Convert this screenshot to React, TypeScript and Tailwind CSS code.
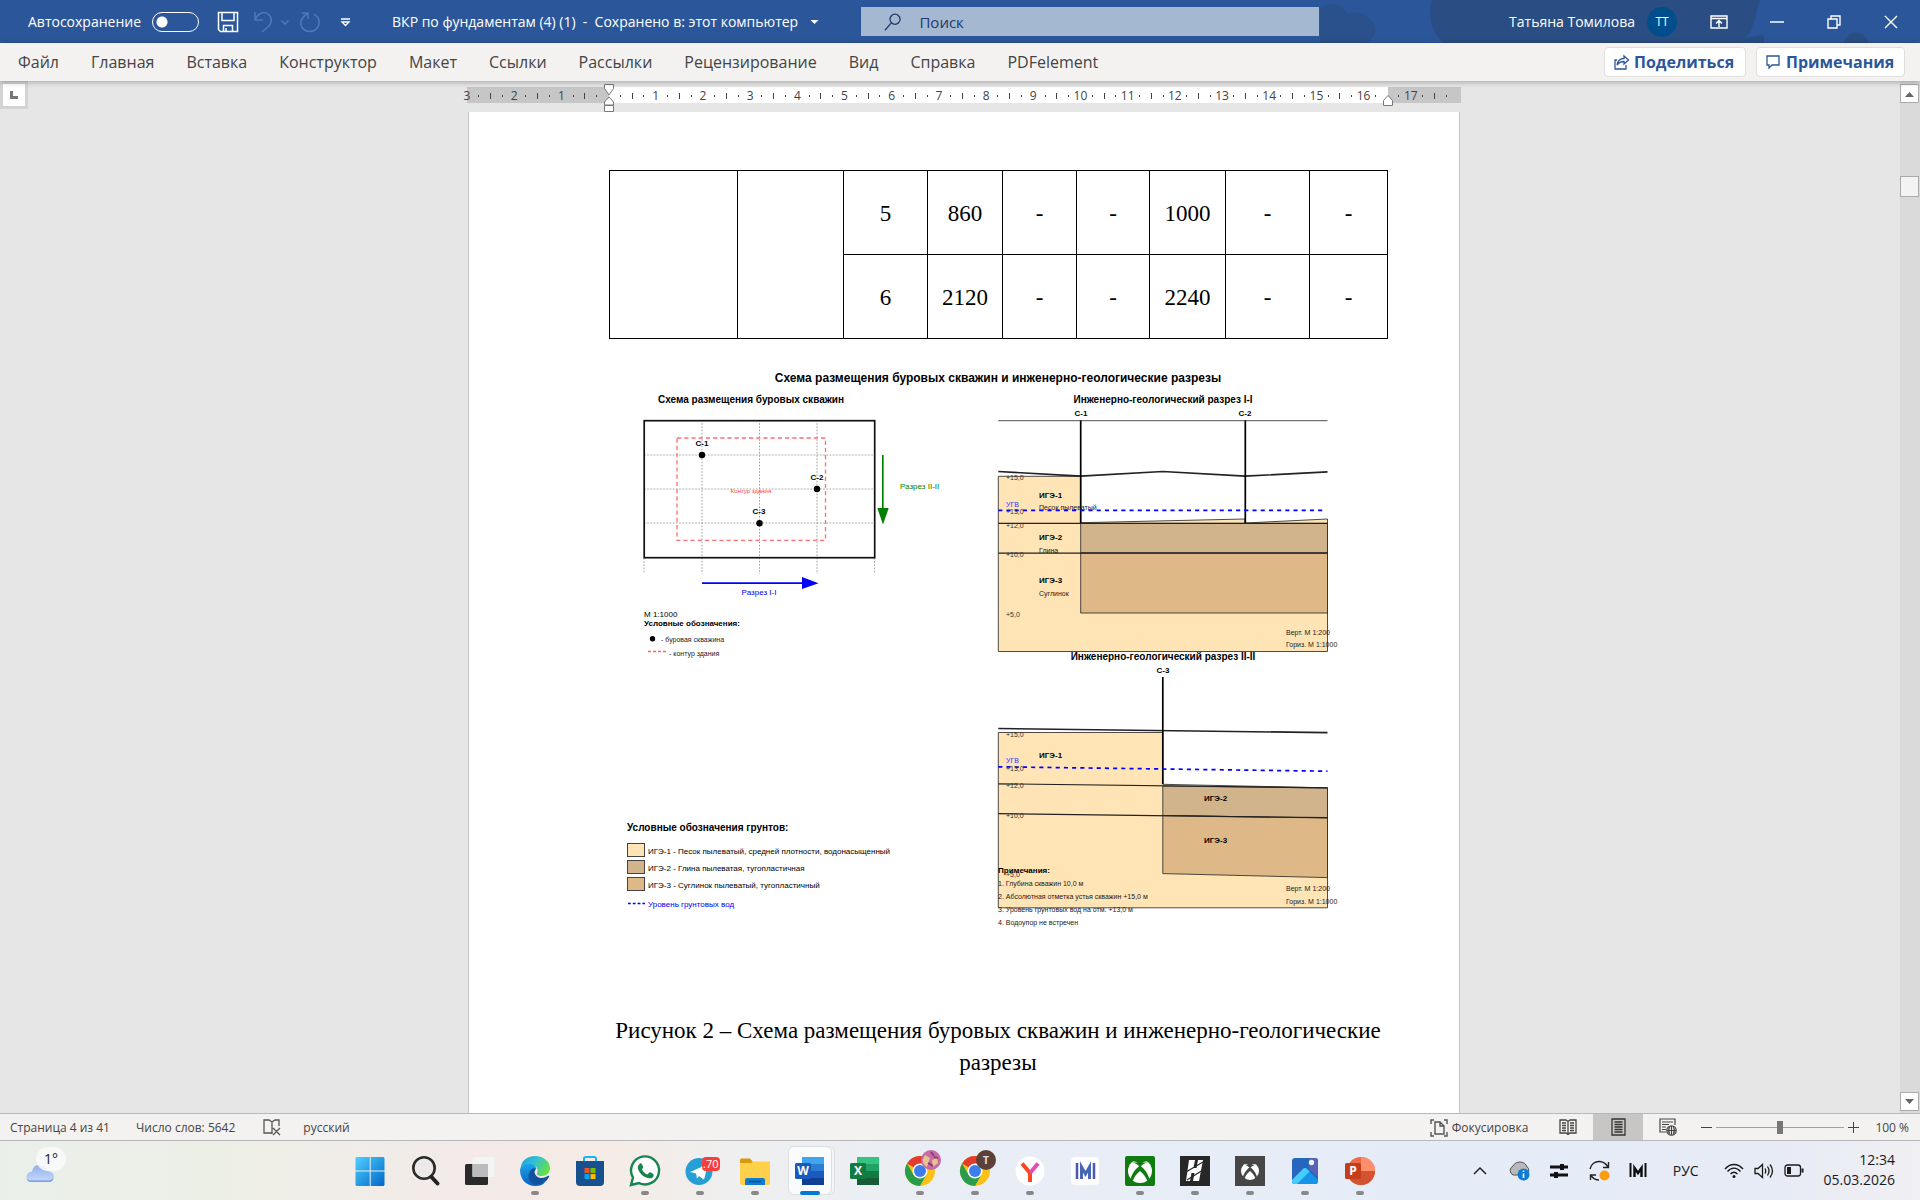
import type { ReactNode } from "react";

const ribbonTabs = [
  "Файл",
  "Главная",
  "Вставка",
  "Конструктор",
  "Макет",
  "Ссылки",
  "Рассылки",
  "Рецензирование",
  "Вид",
  "Справка",
  "PDFelement",
];

const tableRows = [
  ["5", "860", "-", "-", "1000", "-", "-"],
  ["6", "2120", "-", "-", "2240", "-", "-"],
];

function TitleBar() {
  return (
    <header className="relative grid h-[43px] shrink-0 grid-cols-[861fr_458fr_601fr] items-center bg-[#2b579a] text-white">
      <svg
        className="absolute right-0 top-0 h-full w-[600px]"
        viewBox="0 0 600 43"
        preserveAspectRatio="xMaxYMid slice"
        aria-hidden="true"
      >
        <g fill="#2a4d84">
          <path d="M0 8c12-8 22-4 27 5 14-2 24 2 28 14 2 7-3 12-8 16H0z" opacity=".6" />
          <path d="M112 0h26c-8 12-10 28 2 43h-16c-14-12-16-30-12-43z" />
          <path d="M130 0h310c-6 17-4 30-20 43H130z" />
          <path d="M420 43c4-5 12-7 24-8v8zM524 43c4-14 20-14 25 0z" />
        </g>
      </svg>

      <div className="relative flex items-center pl-7">
        <label className="flex items-center gap-[11px] text-sm leading-5">
          Автосохранение
          <input
            type="checkbox"
            role="switch"
            className="h-5 w-[47px] appearance-none rounded-full border border-white bg-[radial-gradient(circle_at_9px_9px,#fff_5px,transparent_6px)]"
          />
        </label>
        <button aria-label="Сохранить" className="ml-[18px]">
          <svg width="22" height="22" viewBox="0 0 22 22" fill="none" stroke="#fff" strokeWidth="1.5">
            <path d="M1.5 1.5h19v19h-17l-2-2zM5 1.5v8h12v-8M6.500 20.500v-6h9v6M9 20v-3" />
          </svg>
        </button>
        <button aria-label="Отменить" className="ml-3.5">
          <svg width="22" height="22" viewBox="0 0 22 22" fill="none" stroke="#4f7ab8" strokeWidth="1.500">
            <path d="M2 1v8h8M2 9c3-7 9-9 13-6 5 4 4 8 1 12l-7 6" />
          </svg>
        </button>
        <button aria-label="Варианты отмены" className="ml-1">
          <svg width="12" height="12" viewBox="0 0 12 12" fill="none" stroke="#4f7ab8" strokeWidth="1.500">
            <path d="M2.500 4.500l3.500 3.500 3.500-3.500" />
          </svg>
        </button>
        <button aria-label="Повторить" className="ml-2">
          <svg width="22" height="22" viewBox="0 0 22 22" fill="none" stroke="#4f7ab8" strokeWidth="1.500">
            <path d="M3 2h6v6M9 2.500C2 6 .5 12 3 16.500c4 5.500 12 5 15.500 0 3-5 1.500-10-3.500-13.500" />
          </svg>
        </button>
        <button aria-label="Настройка панели" className="ml-[18px]">
          <svg width="13" height="12" viewBox="0 0 13 12" fill="none" stroke="#fff" strokeWidth="1.300">
            <path d="M2 3h9M3 6h7l-3.500 3.500z" />
          </svg>
        </button>
        <button className="ml-10 flex items-center gap-3 whitespace-pre text-sm leading-5">
          {"ВКР по фундаментам (4) (1)  -  Сохранено в: этот компьютер"}
          <svg width="9" height="6" viewBox="0 0 9 6" fill="#fff" aria-hidden="true">
            <path d="M.5 1h8l-4 4z" />
          </svg>
        </button>
      </div>

      <label className="relative flex h-[29px] items-center bg-[#a5b8d1] pl-[23px] text-[#1c3a6b]">
        <svg width="19" height="20" viewBox="0 0 19 20" fill="none" stroke="currentColor" strokeWidth="1.400">
          <circle cx="12" cy="7" r="5.500" />
          <path d="M8 11l-7 8" />
        </svg>
        <input
          type="search"
          aria-label="Поиск"
          placeholder="Поиск"
          className="ml-[18px] w-full bg-transparent text-[15px] leading-5 outline-none placeholder:text-[#1c3a6b]"
        />
      </label>

      <div className="relative flex items-center justify-end pr-[19px]">
        <span className="text-sm leading-5">Татьяна Томилова</span>
        <span className="ml-3 flex size-[30px] items-center justify-center rounded-full bg-[#004e8c] text-xs">
          ТТ
        </span>
        <button aria-label="Параметры ленты" className="ml-8 flex w-5 justify-center">
          <svg width="18" height="14" viewBox="0 0 18 14" fill="none" stroke="#fff" strokeWidth="1.400">
            <path d="M1 1h16v12H1zM1 3.500h16M9 12V6M6 8.500L9 5.500l3 3" />
          </svg>
        </button>
        <button aria-label="Свернуть" className="ml-[38px] flex w-5 justify-center">
          <svg width="14" height="14" viewBox="0 0 14 14" stroke="#fff" strokeWidth="1.500">
            <path d="M0 7h14" />
          </svg>
        </button>
        <button aria-label="Свернуть в окно" className="ml-[37px] flex w-5 justify-center">
          <svg width="14" height="14" viewBox="0 0 14 14" fill="none" stroke="#fff" strokeWidth="1.400">
            <path d="M1 4h9v9H1zM4 4V1h9v9h-3" />
          </svg>
        </button>
        <button aria-label="Закрыть" className="ml-[37px] flex w-5 justify-center">
          <svg width="14" height="14" viewBox="0 0 14 14" stroke="#fff" strokeWidth="1.400">
            <path d="M1 1l12 12M13 1L1 13" />
          </svg>
        </button>
      </div>
    </header>
  );
}

function Ribbon() {
  return (
    <nav className="relative z-10 flex h-[38px] shrink-0 items-center bg-[#f3f2f1] pr-[15px] text-base leading-6 text-[#444] shadow-[0_1px_6px_rgba(0,0,0,0.3)]">
      <div className="flex flex-1 gap-8 pl-[18px]">
        {ribbonTabs.map((tab) => (
          <button key={tab}>{tab}</button>
        ))}
      </div>
      <button className="flex h-[30px] w-[142px] items-center gap-1 rounded-sm border border-[#e1dfdd] bg-white pl-2 font-bold text-[#2b579a]">
        <svg width="17" height="16" viewBox="0 0 17 16" fill="none" stroke="currentColor" strokeWidth="1.300">
          <path d="M4 6H2v9h11v-4M4 11c1-5 4-6.500 7-6.500V2l4.500 4-4.500 4V7.500C8 7.500 6 8.500 4 11z" />
        </svg>
        Поделиться
      </button>
      <button className="ml-[10px] flex h-[30px] w-[149px] items-center gap-1 rounded-sm border border-[#e1dfdd] bg-white pl-2 font-bold text-[#2b579a]">
        <svg width="17" height="16" viewBox="0 0 17 16" fill="none" stroke="currentColor" strokeWidth="1.300">
          <path d="M2 2h12v9H7l-3 3v-3H2z" />
        </svg>
        Примечания
      </button>
    </nav>
  );
}

// 84 quarter-centimetre stops, starting 3 cm left of the text margin
function Ruler() {
  return (
    <div className="relative mx-auto mt-1.5 flex h-4 w-[994px] bg-[#c6c6c6] pr-3.5">
      <div className="absolute inset-y-0 left-[142px] right-[73px] bg-white" />
      <div className="relative flex flex-1 items-center justify-between pt-px text-xs leading-4 text-[#444]">
        {Array.from({ length: 84 }, (_, i) => {
          const cm = Math.abs(i / 4 - 3);
          if (i === 12 || i === 78) return <span key={i} className="w-0" />;
          return (
            <span key={i} className="flex w-0 justify-center">
              {i % 4 === 0 ? (
                <span>{cm}</span>
              ) : (
                <span className={i % 4 === 2 ? "h-1.5 w-px shrink-0 bg-[#444]" : "h-0.5 w-px shrink-0 bg-[#444]"} />
              )}
            </span>
          );
        })}
      </div>
      <svg
        className="absolute -top-[3px] left-[136px]"
        width="12"
        height="28"
        viewBox="0 0 12 28"
        fill="#fff"
        stroke="#777"
      >
        <path d="M1.500.5h9v4L6 11 1.500 4.500zM6 13l4.500 5v3h-9v-3zM1.500 21.500h9v6h-9z" />
      </svg>
      <svg
        className="absolute right-[67px] top-2"
        width="12"
        height="12"
        viewBox="0 0 12 12"
        fill="#fff"
        stroke="#777"
      >
        <path d="M6 .5l4.500 5v5h-9v-5z" />
      </svg>
    </div>
  );
}

function BoreholeTable() {
  return (
    <table className="w-full table-fixed border-collapse text-center font-['Liberation_Serif',serif] text-[23px] leading-8 [&_td]:border [&_td]:border-black [&_td]:pt-0.5">
      <colgroup>
        <col className="w-32" />
        <col className="w-[106px]" />
        <col className="w-[84px]" />
        <col className="w-[75px]" />
        <col className="w-[74px]" />
        <col className="w-[73px]" />
        <col className="w-[76px]" />
        <col className="w-[84px]" />
        <col className="w-[78px]" />
      </colgroup>
      <tbody>
        {tableRows.map((row, r) => (
          <tr key={r} className="h-[84px]">
            {r === 0 && <td rowSpan={2} />}
            {r === 0 && <td rowSpan={2} />}
            {row.map((cell, c) => (
              <td key={c}>{cell}</td>
            ))}
          </tr>
        ))}
      </tbody>
    </table>
  );
}

type Mark = { x: number; y: number; text: string };

function Marks({ items, className }: { items: Mark[]; className: string }) {
  return (
    <g className={className}>
      {items.map((m) => (
        <text key={`${m.x}-${m.y}`} x={m.x} y={m.y}>
          {m.text}
        </text>
      ))}
    </g>
  );
}

const elevations: Mark[] = [
  { x: 1006, y: 480, text: "+15,0" },
  { x: 1006, y: 514, text: "+13,0" },
  { x: 1006, y: 528, text: "+12,0" },
  { x: 1006, y: 557, text: "+10,0" },
  { x: 1006, y: 617, text: "+5,0" },
  { x: 1006, y: 737, text: "+15,0" },
  { x: 1006, y: 771, text: "+13,0" },
  { x: 1006, y: 788, text: "+12,0" },
  { x: 1006, y: 818, text: "+10,0" },
  { x: 1006, y: 877, text: "+5,0" },
];

const smallNotes: Mark[] = [
  { x: 661, y: 642, text: "- буровая скважина" },
  { x: 669, y: 656, text: "- контур здания" },
  { x: 1039, y: 510, text: "Песок пылеватый" },
  { x: 1039, y: 553, text: "Глина" },
  { x: 1039, y: 596, text: "Суглинок" },
  { x: 1286, y: 635, text: "Верт. М 1:200" },
  { x: 1286, y: 647, text: "Гориз. М 1:1000" },
  { x: 1286, y: 891, text: "Верт. М 1:200" },
  { x: 1286, y: 904, text: "Гориз. М 1:1000" },
  { x: 998, y: 886, text: "1. Глубина скважин 10,0 м" },
  { x: 998, y: 899, text: "2. Абсолютная отметка устья скважин +15,0 м" },
  { x: 998, y: 912, text: "3. Уровень грунтовых вод на отм. +13,0 м" },
  { x: 998, y: 925, text: "4. Водоупор не встречен" },
];

const layerNames: Mark[] = [
  { x: 1039, y: 498, text: "ИГЭ-1" },
  { x: 1039, y: 540, text: "ИГЭ-2" },
  { x: 1039, y: 583, text: "ИГЭ-3" },
  { x: 1039, y: 758, text: "ИГЭ-1" },
  { x: 1204, y: 801, text: "ИГЭ-2" },
  { x: 1204, y: 843, text: "ИГЭ-3" },
  { x: 644, y: 626, text: "Условные обозначения:" },
  { x: 998, y: 873, text: "Примечания:" },
];

const wells: Mark[] = [
  { x: 702, y: 446, text: "С-1" },
  { x: 817, y: 480, text: "С-2" },
  { x: 759, y: 514, text: "С-3" },
  { x: 1081, y: 416, text: "С-1" },
  { x: 1245, y: 416, text: "С-2" },
  { x: 1163, y: 673, text: "С-3" },
];

const soils = [
  { y: 843, fill: "#ffe4b5", text: "ИГЭ-1 - Песок пылеватый, средней плотности, водонасыщенный" },
  { y: 860, fill: "#d2b48c", text: "ИГЭ-2 - Глина пылеватая, тугопластичная" },
  { y: 877, fill: "#deb887", text: "ИГЭ-3 - Суглинок пылеватый, тугопластичный" },
];

function GeologyScheme() {
  return (
    <svg
      className="block h-[580px] w-full font-['Liberation_Sans',Arial,sans-serif]"
      viewBox="609 360 778 580"
      role="img"
      aria-label="Схема размещения буровых скважин"
    >
      {/* borehole plan */}
      <g stroke="#888" strokeWidth=".8" strokeDasharray="1.600 1.600">
        <path d="M644 558v16M702 420v154M759.500 420v154M817 420v154M874.500 558v16M644 455h231M644 489h231M644 523h231" />
      </g>
      <rect x="644.200" y="420.700" width="230.500" height="137" fill="none" stroke="#111" strokeWidth="1.700" />
      <rect
        x="677"
        y="438"
        width="148.500"
        height="102.300"
        fill="none"
        stroke="#ff7070"
        strokeWidth="1.300"
        strokeDasharray="4.200 3"
      />
      <circle cx="702" cy="455" r="3.200" />
      <circle cx="817" cy="489" r="3.200" />
      <circle cx="759.500" cy="523.300" r="3.200" />
      <path d="M882.800 455v54" stroke="#008000" strokeWidth="1.700" />
      <path d="M877.300 508h11.400l-5.700 16.500z" fill="#008000" />
      <path d="M702 583.200h101" stroke="#00f" strokeWidth="1.700" />
      <path d="M802 577v12l16.500-5.800z" fill="#00f" />
      <circle cx="652.500" cy="638.700" r="2.700" />
      <path d="M648 651.500h18" stroke="#ff6060" strokeWidth="1.300" strokeDasharray="3 2" />

      {/* section I-I */}
      <g stroke="#222" strokeWidth=".8">
        <path
          d="M998.300 476.300h82.400v46.400L1245 519v4l82.500-4v132.500H998.300z"
          fill="#ffe4b5"
        />
        <path d="M1080.700 523.400h246.800V553h-246.800z" fill="#d2b48c" />
        <path d="M1080.700 553h246.800v60h-246.800z" fill="#deb887" />
        <path d="M998.300 523.400h329.200M998.300 553.200h329.200" strokeWidth="1.200" />
        <path d="M998.300 420.700h329.200" />
      </g>
      <path d="M998.300 471.500l82.400 4.700 82-4.700 82.300 4.700 82.500-4.400" fill="none" stroke="#222" strokeWidth="1.700" />
      <path d="M1080.700 420.500V523M1245.300 420.500V523" stroke="#000" strokeWidth="1.700" />
      <path d="M998.300 510.400h327" stroke="#00f" strokeWidth="1.700" strokeDasharray="4.100 4.100" />

      {/* section II-II */}
      <g stroke="#222" strokeWidth=".8">
        <path d="M998.300 732.500h164.500v51.800l164.700 3.500v120H998.300z" fill="#ffe4b5" />
        <path d="M1162.800 786l164.700 2v30l-164.700-2.500z" fill="#d2b48c" />
        <path d="M1162.800 815.500l164.700 2.500v59.600l-164.700-4z" fill="#deb887" />
        <path d="M998.300 783.800l329.200 4M998.300 813.700l329.200 4" strokeWidth="1.200" />
      </g>
      <path d="M998.300 728.500l329.200 4.200" stroke="#222" strokeWidth="1.700" />
      <path d="M1162.800 677v107" stroke="#000" strokeWidth="1.700" />
      <path d="M998.300 766.800l329.200 4.400" stroke="#00f" strokeWidth="1.700" strokeDasharray="4.100 4.100" />

      <Marks items={elevations} className="fill-[#333] text-[7px]" />
      <Marks items={smallNotes} className="fill-[#222] text-[7px]" />
      <Marks items={layerNames} className="fill-black text-[8px] font-bold" />
      <g textAnchor="middle">
        <Marks items={wells} className="fill-black text-[8px] font-bold" />
        <text x="998" y="382" className="text-[12px] font-bold">
          Схема размещения буровых скважин и инженерно-геологические разрезы
        </text>
        <g className="text-[10px] font-bold">
          <text x="751" y="403">Схема размещения буровых скважин</text>
          <text x="1163" y="403">Инженерно-геологический разрез I-I</text>
          <text x="1163" y="660">Инженерно-геологический разрез II-II</text>
        </g>
        <text x="751" y="493" className="fill-[#ff4040] text-[6px]">Контур здания</text>
        <text x="759" y="595" className="fill-[#00f] text-[8px]">Разрез I-I</text>
      </g>
      <text x="900" y="489" className="fill-[#008000] text-[8px]">Разрез II-II</text>
      <text x="644" y="617" className="text-[8px]">М 1:1000</text>
      <text x="1006" y="507" className="fill-[#3030ff] text-[7px]">УГВ</text>
      <text x="1006" y="763" className="fill-[#3030ff] text-[7px]">УГВ</text>

      {/* soil legend */}
      <text x="627" y="831" className="text-[10px] font-bold">Условные обозначения грунтов:</text>
      {soils.map((soil) => (
        <g key={soil.y}>
          <rect x="627.500" y={soil.y + 0.500} width="17" height="13" fill={soil.fill} stroke="#444" />
          <text x="648" y={soil.y + 11} className="text-[8px]">{soil.text}</text>
        </g>
      ))}
      <path d="M628 903.500h17" stroke="#00f" strokeWidth="1.500" strokeDasharray="2.800 2" />
      <text x="648" y="907" className="fill-[#00f] text-[8px]">Уровень грунтовых вод</text>
    </svg>
  );
}

function ScrollBar() {
  return (
    <div className="flex w-5 shrink-0 flex-col bg-[#dadada] pr-px pt-[3px]">
      <button aria-label="Вверх" className="flex h-[19px] items-center justify-center border border-[#ababab] bg-white">
        <svg width="9" height="6" viewBox="0 0 9 6" fill="#666">
          <path d="M0 6h9L4.500 1z" />
        </svg>
      </button>
      <div className="mt-[73px] h-[21px] border border-[#ababab] bg-[#f3f3f3]" />
      <button
        aria-label="Вниз"
        className="mb-0.5 mt-auto flex h-[19px] items-center justify-center border border-[#ababab] bg-white"
      >
        <svg width="9" height="6" viewBox="0 0 9 6" fill="#666">
          <path d="M0 0h9L4.500 5z" />
        </svg>
      </button>
    </div>
  );
}

function StatusBar() {
  return (
    <footer className="flex h-7 shrink-0 items-stretch border-y border-[#b8b8bc] bg-[#f3f2f1] pl-[10px] pr-[11px] text-xs leading-4 text-[#444]">
      <button className="pt-0.5">Страница 4 из 41</button>
      <button className="ml-[26px] pt-0.5">Число слов: 5642</button>
      <button aria-label="Правописание" className="ml-7 flex items-center">
        <svg width="18" height="18" viewBox="0 0 18 18" fill="none" stroke="#555" strokeWidth="1.300">
          <path d="M9 15H1V2h5l3 2 3-2h4v6M9 4v12M10 10l7 7M17 10l-7 7" />
        </svg>
      </button>
      <button className="ml-[22px] pt-0.5">русский</button>

      <button className="ml-auto flex items-center gap-1 pt-px">
        <svg width="18" height="18" viewBox="0 0 18 18" fill="none" stroke="#555" strokeWidth="1.400">
          <path d="M4 1H1v4M14 1h3v4M1 13v4h3M17 13v4h-3M5 3h5l4 4v8H5zM10 3v4h4" />
        </svg>
        Фокусировка
      </button>
      <button aria-label="Режим чтения" className="ml-[15px] flex w-[50px] items-center justify-center">
        <svg width="18" height="17" viewBox="0 0 18 17" fill="none" stroke="#444" strokeWidth="1.300">
          <path d="M9 2.500L7 1H1v13h6l2 1.500L11 14h6V1h-6zV15M3 4h4M3 6.500h4M3 9h4M3 11.500h4M11 4h4M11 6.500h4M11 9h4M11 11.500h4" />
        </svg>
      </button>
      <button aria-label="Разметка страницы" className="flex w-[50px] items-center justify-center bg-[#c8c6c4]">
        <svg width="15" height="18" viewBox="0 0 15 18" fill="none" stroke="#333" strokeWidth="1.300">
          <path d="M1 1h13v16H1zM3.500 4h8M3.500 6.500h8M3.500 9h8M3.500 11.500h8M3.500 14h8" />
        </svg>
      </button>
      <button aria-label="Веб-документ" className="flex w-[50px] items-center justify-center">
        <svg width="18" height="18" viewBox="0 0 18 18" fill="none" stroke="#444" strokeWidth="1.200">
          <path d="M7 14H1V1h15v6M3 4h11M3 6.500h7M3 9h4M3 11.500h4" />
          <circle cx="12.500" cy="12.500" r="4.700" fill="#f3f2f1" />
          <path d="M8 12.500h9M12.500 8v9M10.500 9c-1 2-1 5 0 7M14.500 9c1 2 1 5 0 7" />
        </svg>
      </button>
      <button aria-label="Уменьшить" className="ml-2 flex items-center">
        <svg width="11" height="11" viewBox="0 0 11 11" stroke="#444">
          <path d="M0 5.500h11" />
        </svg>
      </button>
      <input
        type="range"
        aria-label="Масштаб"
        defaultValue={50}
        className="mx-1 my-auto h-[13px] w-32 appearance-none bg-[linear-gradient(#a0a0a0,#a0a0a0)] bg-size-[100%_1px] bg-center bg-no-repeat [&::-webkit-slider-thumb]:h-[13px] [&::-webkit-slider-thumb]:w-1.5 [&::-webkit-slider-thumb]:appearance-none [&::-webkit-slider-thumb]:bg-[#777]"
      />
      <button aria-label="Увеличить" className="flex items-center">
        <svg width="11" height="11" viewBox="0 0 11 11" stroke="#444">
          <path d="M0 5.500h11M5.500 0v11" />
        </svg>
      </button>
      <button className="ml-4 pt-0.5">100 %</button>
    </footer>
  );
}

function Icon({ children }: { children: ReactNode }) {
  return (
    <svg width="32" height="32" viewBox="0 0 32 32" aria-hidden="true">
      {children}
    </svg>
  );
}

function StartIcon() {
  return (
    <Icon>
      <defs>
        <linearGradient id="start" x1="0" y1="0" x2="1" y2="1">
          <stop stopColor="#4fd0ff" />
          <stop offset="1" stopColor="#0067c8" />
        </linearGradient>
      </defs>
      <path d="M2.500 2h13.200v13.600H1.500V3zM16.700 2h12.800l1 1v12.600H16.700zM1.500 16.600h14.200v14.400H2.500l-1-1zM16.700 16.600h13.800V30l-1 1H16.700z" fill="url(#start)" />
    </Icon>
  );
}

function SearchIcon() {
  return (
    <Icon>
      <circle cx="15" cy="13" r="10.700" fill="#eceae9" stroke="#2b2b2b" strokeWidth="2.600" />
      <path d="M22.500 22l6 6.500" stroke="#222" strokeWidth="4" strokeLinecap="round" />
    </Icon>
  );
}

function TaskViewIcon() {
  return (
    <Icon>
      <rect x="1" y="9" width="23" height="21" rx="1.500" fill="#2a2a2a" />
      <rect x="8.500" y="2" width="22" height="20" rx="1.500" fill="#f4f4f4" />
      <path d="M8.500 9H24v13H8.500z" fill="#bcbcbc" />
    </Icon>
  );
}

function EdgeIcon() {
  return (
    <Icon>
      <defs>
        <linearGradient id="edge-top" x1="0" y1="0" x2="1" y2=".5">
          <stop stopColor="#1b9de2" />
          <stop offset=".5" stopColor="#35c1d0" />
          <stop offset="1" stopColor="#63e04a" />
        </linearGradient>
        <linearGradient id="edge-left" x1="0" y1="0" x2="0" y2="1">
          <stop stopColor="#1ba5e8" />
          <stop offset="1" stopColor="#0b5fc0" />
        </linearGradient>
      </defs>
      <path d="M1.500 14C2 6 8 1 16 1c9 0 15 6 15 12 0 5-4 8-8 8-4 0-6-1-5-3 2-4-1-8-6-8-5 0-9 2-10.500 4z" fill="url(#edge-top)" />
      <path d="M1 15c1-4 5-6.500 9.500-6 4 0 6.500 2 7 5-6 0-8 6-4 11 4 4 9 4 13 2-3 3-6 4-10 4C7 31 1 24 1 15z" fill="url(#edge-left)" />
      <path d="M13 14c-4 3-5 9-1 13 4 4 13 4 18-5 1-2-1-1-3 0-5 2-9 1-11-3-1-2 0-4 1-5-1-1-3-1-4 0z" fill="#10529e" />
    </Icon>
  );
}

function StoreIcon() {
  return (
    <Icon>
      <path d="M10 7V3.500Q10 2 12 2h8q2 0 2 1.500V7" fill="none" stroke="#18b4f5" strokeWidth="2" />
      <path d="M2 6h28v21q0 4-4 4H6q-4 0-4-4z" fill="#17508f" />
      <path d="M10.500 13h5v5h-5z" fill="#f25022" />
      <path d="M16.500 13h5v5h-5z" fill="#7fba00" />
      <path d="M10.500 19h5v5h-5z" fill="#00a4ef" />
      <path d="M16.500 19h5v5h-5z" fill="#ffb900" />
    </Icon>
  );
}

function WhatsAppIcon() {
  return (
    <Icon>
      <path d="M2 30l2-7.500A14 14 0 1 1 10 28z" fill="#fff" stroke="#168650" strokeWidth="2.400" />
      <path d="M10.500 9c1-1 2-.8 2.500.2l1.200 2.800c.2.700-.9 1.700-1.300 2.300 1.300 2.600 3 4.200 5.600 5.300l1.800-2c.5-.5 1-.3 1.500 0l2.600 1.300c1.300 3-2 4.800-4.300 4.400-6-1-10-5-11.300-10C8.600 11.500 9.500 10 10.500 9z" fill="#168650" />
    </Icon>
  );
}

function TelegramIcon() {
  return (
    <Icon>
      <circle cx="15" cy="16.500" r="13.500" fill="#269fd4" />
      <path d="M6 17l16-7c1-.4 1.600.2 1.400 1.300L20.500 23c-.3 1.300-1 1.400-2 .8L15 21l-2 2.500-1-5z" fill="#fff" />
      <rect x="18" y="2" width="18" height="14" rx="4" fill="#f43f3a" />
    </Icon>
  );
}

function FolderIcon() {
  return (
    <Icon>
      <path d="M1 5q0-1.500 1.500-1.500H11L14 7v6H1z" fill="#d9990b" />
      <path d="M1 8h11l2-1.500h17V28q0 2-2 2H3q-2 0-2-2z" fill="#ffd04b" />
      <path d="M6 30v-5q0-2 2-2h16q2 0 2 2v5z" fill="#127bcf" />
      <path d="M10 26.500h12" stroke="#0b4f8f" strokeWidth="1.500" />
    </Icon>
  );
}

function OfficeIcon({ letter, shades, badge }: { letter: string; shades: string[]; badge: string }) {
  return (
    <Icon>
      {shades.map((shade, i) => (
        <rect key={shade} x="8" y={2 + i * 7} width="22" height="7" fill={shade} />
      ))}
      <rect x="1" y="8" width="16" height="16" rx="1.500" fill={badge} />
      <text x="9" y="20" textAnchor="middle" className="fill-white text-[12px] font-bold">
        {letter}
      </text>
    </Icon>
  );
}

function PowerPointIcon() {
  return (
    <Icon>
      <circle cx="17" cy="16" r="14" fill="#ed6c47" />
      <path d="M17 2a14 14 0 0 1 14 14H17z" fill="#ff8f6b" />
      <path d="M3 16h28a14 14 0 0 1-28 0z" fill="#d35230" />
      <rect x="1" y="8" width="16" height="16" rx="1.500" fill="#c43e1c" />
      <text x="9" y="20" textAnchor="middle" className="fill-white text-[12px] font-bold">
        P
      </text>
    </Icon>
  );
}

function ChromeIcon({ children }: { children: ReactNode }) {
  return (
    <Icon>
      <circle cx="16" cy="16" r="15" fill="#fbc116" />
      <path d="M16 16L3 8.500A15 15 0 0 1 29 8.500H16z" fill="#e33b2e" />
      <path d="M3 8.500A15 15 0 0 0 16 31l6.500-11.500L9.500 19.500z" fill="#2a9d4a" />
      <circle cx="16" cy="16" r="7.500" fill="#fff" />
      <circle cx="16" cy="16" r="6" fill="#3b7ded" />
      {children}
    </Icon>
  );
}

function YandexIcon() {
  return (
    <Icon>
      <circle cx="16" cy="16" r="14.500" fill="#fff" />
      <path d="M8 8.500l8 9.500v9" fill="none" stroke="#fb4620" strokeWidth="4" />
      <path d="M16 18l8-9.500" stroke="#e94bb5" strokeWidth="4" />
    </Icon>
  );
}

function MarkIcon() {
  return (
    <Icon>
      <rect x="2" y="2" width="28" height="28" rx="4" fill="#fdfdff" />
      <path d="M8 8v16M25 8v16" stroke="#4c5aa8" strokeWidth="2.500" />
      <path d="M12.500 24V12l4 7 4-7v12" fill="none" stroke="#4766b5" strokeWidth="3" />
    </Icon>
  );
}

function XboxIcon({ fill, size }: { fill: string; size: number }) {
  return (
    <Icon>
      <rect x="1" y="1" width="30" height="30" rx={size > 10 ? 2 : 0} fill={fill} />
      <g transform={`translate(16 16) scale(${size / 10})`}>
        <circle r="10" fill="#fff" />
        <path d="M0-4.500C-4-1.500-7.500 3-8.500 9.500L-6 8C-4.500 4.500-2.500 2 0 0 2.500 2 4.500 4.500 6 8L8.500 9.500C7.500 3 4-1.500 0-4.500z" fill={fill} />
        <path d="M-8-8C-5-8.500-2-7.500 0-6 2-7.500 5-8.500 8-8L4.500-10.500h-9zM-7-7C-4-7-1.500-5 0-3 1.500-5 4-7 7-7" fill={fill} />
      </g>
    </Icon>
  );
}

function HIcon() {
  return (
    <Icon>
      <path d="M1 1h30v30H1z" fill="#272727" />
      <path d="M10 5h6l-1.500 8h3L19 5h5l-4 21h-6l1.500-8h-3L11 26H7z" fill="#fff" />
      <path d="M7 17L24 7M8 25l16-10" stroke="#272727" strokeWidth="1.200" />
    </Icon>
  );
}

function PhotosIcon() {
  return (
    <Icon>
      <rect x="3" y="3" width="26" height="26" rx="3" fill="#2667bd" />
      <path d="M20 3h6q3 0 3 3v16l-9-8z" fill="#5a61b4" />
      <path d="M3 25l11-11q2-2 4 0l11 11v1q0 3-3 3H6q-3 0-3-3z" fill="#1495e8" />
      <path d="M3 25l11-11q2-2 4 0l2.500 2.500L8 29H6q-3 0-3-3z" fill="#46cdfb" />
      <circle cx="22.500" cy="7.500" r="2.700" fill="#e9f2ff" />
    </Icon>
  );
}

const apps: { name: string; icon: ReactNode; running?: boolean; active?: boolean; badge?: string }[] = [
  { name: "Пуск", icon: <StartIcon /> },
  { name: "Поиск", icon: <SearchIcon /> },
  { name: "Представление задач", icon: <TaskViewIcon /> },
  { name: "Edge", icon: <EdgeIcon />, running: true },
  { name: "Store", icon: <StoreIcon /> },
  { name: "WhatsApp", icon: <WhatsAppIcon />, running: true },
  { name: "Telegram", icon: <TelegramIcon />, running: true, badge: "..70" },
  { name: "Проводник", icon: <FolderIcon />, running: true },
  {
    name: "Word",
    icon: <OfficeIcon letter="W" shades={["#41a5ee", "#2b7cd3", "#185abd", "#103f91"]} badge="#185abd" />,
    active: true,
  },
  {
    name: "Excel",
    icon: <OfficeIcon letter="X" shades={["#33c481", "#21a366", "#107c41", "#185c37"]} badge="#107c41" />,
  },
  {
    name: "Chrome 1",
    icon: (
      <ChromeIcon>
        <circle cx="27" cy="5" r="10" fill="#c56aa5" />
        <path d="M21 0l5 3-3 9c-3-2-5-5-4-8zM28 5l5-2 1 5-5 4z" fill="#e5c48f" />
        <path d="M27-3l3 4M24 8l5 3M30 2l4 1" stroke="#8d3268" strokeWidth="1.500" />
      </ChromeIcon>
    ),
    running: true,
  },
  {
    name: "Chrome 2",
    icon: (
      <ChromeIcon>
        <circle cx="27" cy="5" r="10" fill="#5d4037" />
        <text x="27" y="9" textAnchor="middle" className="fill-[#ddd] text-[11px] font-bold">
          T
        </text>
      </ChromeIcon>
    ),
    running: true,
  },
  { name: "Яндекс", icon: <YandexIcon />, running: true },
  { name: "M", icon: <MarkIcon /> },
  { name: "Xbox", icon: <XboxIcon fill="#107c10" size={12} />, running: true },
  { name: "H", icon: <HIcon />, running: true },
  { name: "Game Bar", icon: <XboxIcon fill="#464646" size={9} />, running: true },
  { name: "Фотографии", icon: <PhotosIcon />, running: true },
  { name: "PowerPoint", icon: <PowerPointIcon />, running: true },
];

function Taskbar() {
  return (
    <div className="flex h-[59px] shrink-0 items-center bg-[linear-gradient(90deg,#ebefea_0%,#edefe6_12%,#f3eae9_24%,#f5ece6_32%,#efefef_38%,#e9eef5_50%,#e5ecf8_80%,#e7ebf6_92%,#f0eff2_100%)] pr-[25px] text-sm text-[#1a1a1a]">
      <div className="w-[342px] shrink-0 pl-[26px]">
        <button aria-label="Погода" className="relative block h-10 w-10">
          <svg width="34" height="40" viewBox="0 0 40 40" preserveAspectRatio="xMinYMid meet">
            <defs>
              <linearGradient id="cloud" x1="0" y1="0" x2="0" y2="1">
                <stop stopColor="#8fadec" />
                <stop offset="1" stopColor="#c9dcf8" />
              </linearGradient>
            </defs>
            <path d="M6 33a6 6 0 0 1 1-12c1-6 5-9 9-8 5 0 8 3 9 7 11 1 10 13 2 13z" fill="url(#cloud)" />
            <path d="M1 28q0 5 5 5h21q5 0 5-5-2 3-5 3H6q-4 0-5-3z" fill="#7da4e8" />
          </svg>
          <span className="absolute right-0 -top-1 flex h-6 w-[30px] items-center justify-center rounded-full bg-[#f8f9f9]/90">
            1°
          </span>
        </button>
      </div>
      <div className="flex">
        {apps.map((app) => (
          <button key={app.name} aria-label={app.name} className="relative flex h-[59px] w-[55px] items-center justify-center">
            {app.active && (
              <>
                <span className="absolute inset-y-[5px] left-[7px] right-0.5 rounded-md border border-[#dcdfe4] bg-[#f3f5f8]" />
                <span className="absolute inset-y-[5px] left-1.5 right-[5px] rounded-md border border-[#dcdfe4] bg-[#fafbfd]" />
              </>
            )}
            <span className="relative [&>svg]:overflow-visible">
              {app.icon}
              {app.badge && (
                <span className="absolute -right-[3px] top-0.5 text-[11px] leading-[14px] text-white">{app.badge}</span>
              )}
            </span>
            {app.running && <span className="absolute bottom-[5px] h-1 w-2 rounded-full bg-[#888]" />}
            {app.active && <span className="absolute bottom-[5px] h-1 w-5 rounded-full bg-[#0078d4]" />}
          </button>
        ))}
      </div>

      <div className="ml-auto flex items-center">
        <button aria-label="Скрытые значки" className="w-[35px]">
          <svg width="14" height="9" viewBox="0 0 14 9" fill="none" stroke="#222" strokeWidth="1.500">
            <path d="M1 8l6-6 6 6" />
          </svg>
        </button>
        <button aria-label="OneDrive" className="w-[42px]">
          <svg width="22" height="20" viewBox="0 0 22 20">
            <path d="M5 14a5 5 0 0 1 0-9c2-5 12-6 14 1 3 1 2 8-1 8z" fill="#b9b9b9" stroke="#555" />
            <circle cx="15.500" cy="13.500" r="6" fill="#0f7bd8" />
            <path d="M15.500 9.500v1.500M15.500 12.500v4.500" stroke="#fff" strokeWidth="1.600" />
          </svg>
        </button>
        <button aria-label="Параметры" className="w-[39px]">
          <svg width="18" height="16" viewBox="0 0 18 16" fill="none" stroke="#111" strokeWidth="3">
            <path d="M0 4h18M0 12h18" />
            <path d="M12 1v6M6 9v6" strokeWidth="4" />
          </svg>
        </button>
        <button aria-label="Обновление" className="w-10">
          <svg width="21" height="22" viewBox="0 0 21 22" fill="none" stroke="#222" strokeWidth="1.400">
            <path d="M1 9c1-5 5-8 10-7.500 4 .5 6 2 8 5.500M19.500 2v5.500H14M1.500 20v-5H7M2 15.500c2 3 4 4.500 8 4.500" />
            <circle cx="15.500" cy="15.500" r="5" fill="#ff9b0f" stroke="none" />
          </svg>
        </button>
        <button aria-label="Mark" className="w-[44px]">
          <svg width="18" height="15" viewBox="0 0 18 15" fill="none" stroke="#111">
            <path d="M1.500 0v14M16.500 0v14" strokeWidth="2" />
            <path d="M5.500 14V5L9 10l3.500-5v9" strokeWidth="2.500" />
          </svg>
        </button>
        <button>РУС</button>
        <button aria-label="Сеть и звук" className="ml-[25px] flex items-center gap-2.5">
          <svg width="20" height="16" viewBox="0 0 20 16" fill="none" stroke="#1a1a1a" strokeWidth="1.400">
            <path d="M1 6c5-6 13-6 18 0M3.500 8.500c4-4.500 9-4.500 13 0M6.500 11c2.500-2.500 4.500-2.500 7 0" />
            <circle cx="10" cy="13.500" r="1.500" fill="#1a1a1a" stroke="none" />
          </svg>
          <svg width="20" height="16" viewBox="0 0 20 16" fill="none" stroke="#1a1a1a" strokeWidth="1.300">
            <path d="M1 5.500h3l4.500-4v13L4 10.500H1zM11 5.500q1.500 2.500 0 5M13.500 3.500q3 4.500 0 9M16 1.500q5 6.500 0 13" />
          </svg>
          <svg width="20" height="13" viewBox="0 0 20 13" fill="none" stroke="#1a1a1a" strokeWidth="1.300">
            <rect x="1" y="1" width="15.500" height="11" rx="2.500" />
            <rect x="3" y="3" width="4" height="7" fill="#1a1a1a" stroke="none" />
            <path d="M18.500 4.500v4" strokeWidth="2" />
          </svg>
        </button>
        <div className="ml-5 pb-0.5 text-right leading-5">
          <div>12:34</div>
          <div>05.03.2026</div>
        </div>
      </div>
    </div>
  );
}

export default function App() {
  return (
    <div className="flex h-screen flex-col overflow-hidden bg-[#e6e6e6] font-['Open_Sans','Noto_Sans',sans-serif]">
      <TitleBar />
      <Ribbon />
      <main className="flex min-h-0 flex-1">
        <div className="w-7 shrink-0">
          <button
            aria-label="Позиция табуляции"
            className="flex h-7 w-7 items-center justify-center border-[3px] border-[#d4d4d4] bg-white"
          >
            <svg width="8" height="8" viewBox="0 0 8 8" fill="none" stroke="#777" strokeWidth="3">
              <path d="M1.500 0v6.500H8" />
            </svg>
          </button>
        </div>
        <div className="min-w-0 flex-1 overflow-hidden">
          <Ruler />
          <article className="mx-auto mt-[9px] min-h-full w-[992px] border-x border-[#c6c6c6] bg-white pl-[140px] pr-[72px] pt-[58px]">
            <BoreholeTable />
            <figure className="mt-[21px]">
              <GeologyScheme />
              <figcaption className="mt-[75px] text-center font-['Liberation_Serif',serif] text-[23px] leading-8">
                Рисунок 2 – Схема размещения буровых скважин и инженерно-геологические разрезы
              </figcaption>
            </figure>
          </article>
        </div>
        <ScrollBar />
      </main>
      <StatusBar />
      <Taskbar />
    </div>
  );
}
